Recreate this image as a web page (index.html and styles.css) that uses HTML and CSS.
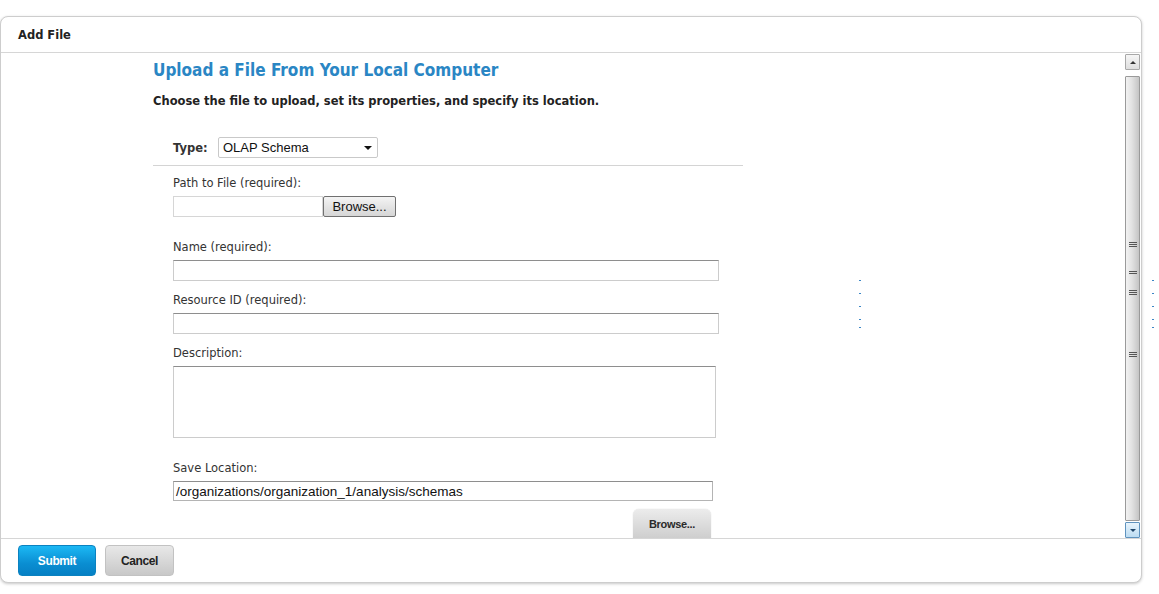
FILE: index.html
```html
<!DOCTYPE html>
<html>
<head>
<meta charset="utf-8">
<title>Add File</title>
<link rel="stylesheet" href="styles.css">
</head>
<body>
<div class="dialog">
  <div class="header">Add File</div>
  <div class="body">
    <div class="main">
      <h1 class="title">Upload a File From Your Local Computer</h1>
      <p class="intro">Choose the file to upload, set its properties, and specify its location.</p>
      <div class="type-row">
        <span class="type-label">Type:</span>
        <div class="select"><span>OLAP Schema</span><span class="caret"></span></div>
      </div>
      <div class="sep"></div>
      <div class="fields">
        <label class="lbl lbl-first">Path to File (required):</label>
        <div class="file-row">
          <div class="input file-input"></div>
          <div class="win-btn">Browse...</div>
        </div>
        <label class="lbl lbl-gap">Name (required):</label>
        <div class="input w-name"></div>
        <label class="lbl">Resource ID (required):</label>
        <div class="input w-name"></div>
        <label class="lbl">Description:</label>
        <div class="input textarea"></div>
        <label class="lbl lbl-gap">Save Location:</label>
        <div class="input w-save"><span class="val">/organizations/organization_1/analysis/schemas</span></div>
        <div class="browse-row"><div class="gray-btn">Browse...</div></div>
      </div>
    </div>
    <div class="scrollbar">
      <div class="sb-btn sb-up"><span class="tri-up"></span></div>
      <div class="sb-track">
        <div class="sb-thumb">
          <span class="grip g1"></span>
          <span class="grip g2 two"></span>
          <span class="grip g3"></span>
          <span class="grip g4"></span>
        </div>
      </div>
      <div class="sb-btn sb-down"><span class="tri-down"></span></div>
    </div>
  </div>
  <div class="footer">
    <div class="btn btn-primary">Submit</div>
    <div class="btn btn-secondary">Cancel</div>
  </div>
</div>
<div class="ticks t1"><i></i><i></i><i></i><i class="near"></i><i></i></div>
<div class="ticks t2"><i></i><i></i><i></i><i class="near"></i><i></i></div>
</body>
</html>
```

FILE: styles.css
```css
html, body {
  margin: 0;
  padding: 0;
  background: #ffffff;
}
body {
  font-family: "DejaVu Sans", Verdana, sans-serif;
  color: #333333;
  position: relative;
  height: 594px;
  overflow: hidden;
}
.dialog {
  margin-top: 16px;
  width: 1142px;
  height: 567px;
  box-sizing: border-box;
  border: 1px solid #cdcdcd;
  border-radius: 8px;
  box-shadow: 0 1px 3px rgba(0,0,0,0.22);
  display: flex;
  flex-direction: column;
  overflow: hidden;
  background: #fff;
}
.header {
  height: 35px;
  flex: none;
  border-bottom: 1px solid #d6d6d6;
  padding-left: 17px;
  display: flex;
  align-items: center;
  font-size: 11.5px;
  font-weight: bold;
  color: #222;
}
.body {
  height: 485px;
  flex: none;
  display: flex;
}
.main {
  flex: 1;
  padding-left: 152px;
  overflow: hidden;
}
.title {
  margin: 7px 0 0 0;
  font-family: "DejaVu Sans Condensed", "DejaVu Sans", sans-serif;
  font-size: 17px;
  line-height: 20px;
  font-weight: bold;
  color: #2a86c4;
}
.intro {
  margin: 14px 0 0 0;
  font-size: 11.5px;
  line-height: 14px;
  font-weight: bold;
  color: #222;
}
.type-row {
  margin-top: 29px;
  padding-left: 20px;
  display: flex;
  align-items: center;
  height: 21px;
}
.type-label {
  font-size: 11.5px;
  font-weight: bold;
  color: #333;
  width: 45px;
}
.select {
  width: 160px;
  height: 21px;
  box-sizing: border-box;
  border: 1px solid #c9c9c9;
  border-radius: 2px;
  display: flex;
  align-items: center;
  justify-content: space-between;
  padding: 0 5px 0 4px;
  font-family: "Liberation Sans", Arial, sans-serif;
  font-size: 13px;
  color: #111;
}
.caret {
  width: 0;
  height: 0;
  border-left: 4px solid transparent;
  border-right: 4px solid transparent;
  border-top: 4px solid #111;
}
.sep {
  margin-top: 7px;
  width: 590px;
  height: 1px;
  background: #d4d4d4;
}
.fields {
  padding-left: 20px;
  display: flex;
  flex-direction: column;
  align-items: flex-start;
}
.lbl {
  display: block;
  font-size: 11.5px;
  line-height: 14px;
  color: #333;
  margin-top: 12px;
  margin-bottom: 6px;
}
.lbl-first { margin-top: 10px; }
.lbl-gap { margin-top: 23px; }
.input {
  box-sizing: border-box;
  height: 21px;
  border: 1px solid #cccccc;
  border-top-color: #8e8e8e;
  background: #fff;
}
.file-row {
  display: flex;
  align-items: center;
}
.file-input {
  width: 150px;
  border-color: #d6d6d6;
}
.win-btn {
  width: 73px;
  height: 21px;
  box-sizing: border-box;
  border: 1px solid #707070;
  border-radius: 2px;
  background: linear-gradient(#f4f4f4, #e4e4e4 50%, #d6d6d6);
  font-family: "Liberation Sans", Arial, sans-serif;
  font-size: 13px;
  color: #111;
  display: flex;
  align-items: center;
  justify-content: center;
}
.w-name { width: 546px; }
.textarea {
  width: 543px;
  height: 72px;
}
.w-save {
  width: 540px;
  height: 20px;
  display: flex;
  align-items: center;
  padding-left: 2px;
  border-color: #b4b4b4;
  border-top-color: #8e8e8e;
  font-family: "Liberation Sans", Arial, sans-serif;
  font-size: 13.5px;
  color: #111;
}
.browse-row {
  width: 538px;
  display: flex;
  justify-content: flex-end;
  margin-top: 8px;
}
.gray-btn {
  width: 78px;
  height: 34px;
  box-sizing: border-box;
  border-radius: 6px;
  background: linear-gradient(#ececec, #c9c9c9);
  box-shadow: 0 0 1px rgba(0,0,0,0.25);
  font-family: "Liberation Sans Narrow", "Liberation Sans", Arial, sans-serif;
  font-size: 11px;
  font-weight: bold;
  color: #2a2a2a;
  display: flex;
  justify-content: center;
  padding-top: 9px;
  letter-spacing: -0.3px;
}
.scrollbar {
  width: 15px;
  margin-right: 1px;
  display: flex;
  flex-direction: column;
  padding-top: 1px;
}
.sb-btn {
  height: 16px;
  box-sizing: border-box;
  border: 1px solid #a8a8a8;
  border-radius: 1px;
  display: flex;
  align-items: center;
  justify-content: center;
}
.sb-up {
  background: linear-gradient(#f6f6f6, #dedede);
}
.sb-down {
  margin-top: 1px;
  border-color: #5f93be;
  background: linear-gradient(#e8f4fc, #bcdcf2);
}
.tri-up {
  width: 0; height: 0;
  border-left: 3px solid transparent;
  border-right: 3px solid transparent;
  border-bottom: 3px solid #333;
}
.tri-down {
  width: 0; height: 0;
  border-left: 3px solid transparent;
  border-right: 3px solid transparent;
  border-top: 3px solid #20466a;
}
.sb-track {
  flex: 1;
  padding-top: 6px;
  display: flex;
  flex-direction: column;
}
.sb-thumb {
  flex: 1;
  position: relative;
  box-sizing: border-box;
  border: 1px solid #9a9a9a;
  border-radius: 1px;
  background: linear-gradient(90deg, #f2f2f2, #e2e2e2 45%, #cfcfcf 80%, #c4c4c4);
}
.grip {
  position: absolute;
  left: 3px;
  width: 8px;
  height: 1px;
  background: #555;
  box-shadow: 0 2px 0 #555, 0 4px 0 #555;
}
.grip.two { box-shadow: 0 2px 0 #555; }
.g1 { top: 165px; }
.g2 { top: 194px; }
.g3 { top: 213px; }
.g4 { top: 275px; }
.footer {
  flex: 1;
  border-top: 1px solid #d6d6d6;
  display: flex;
  align-items: flex-start;
  padding: 6px 0 0 17px;
  gap: 9px;
}
.btn {
  height: 31px;
  box-sizing: border-box;
  border-radius: 4px;
  display: flex;
  align-items: center;
  justify-content: center;
  font-family: "Liberation Sans", Arial, sans-serif;
  font-size: 12px;
  font-weight: bold;
  letter-spacing: -0.4px;
}
.btn-primary {
  width: 78px;
  color: #fff;
  background: linear-gradient(#1cb8f4, #0a8ed2 60%, #0680c4);
  border: 1px solid #0b82c0;
}
.btn-secondary {
  width: 69px;
  color: #222;
  background: linear-gradient(#e8e8e8, #c8c8c8);
  border: 1px solid #c2c2c2;
}
.ticks {
  position: absolute;
  top: 280px;
  display: flex;
  flex-direction: column;
}
.ticks i {
  display: block;
  width: 2px;
  height: 1px;
  background: #3b86c6;
  margin-bottom: 12px;
}
.ticks i.near { margin-bottom: 7px; }
.t1 { left: 859px; }
.t2 { left: 1152px; }
```
